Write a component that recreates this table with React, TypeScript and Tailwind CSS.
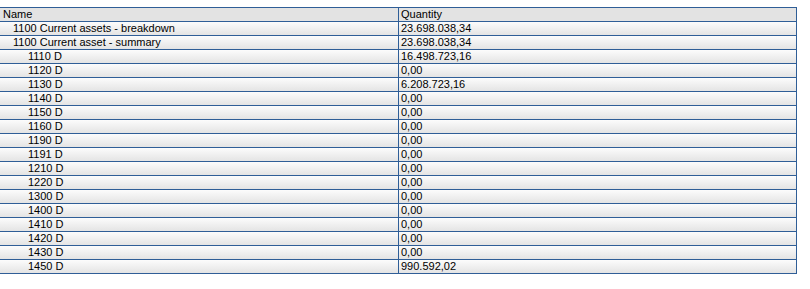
const rows: { name: string; level: number; qty: string }[] = [
  { name: '1100 Current assets - breakdown', level: 1, qty: '23.698.038,34' },
  { name: '1100 Current asset - summary', level: 1, qty: '23.698.038,34' },
  { name: '1110 D', level: 2, qty: '16.498.723,16' },
  { name: '1120 D', level: 2, qty: '0,00' },
  { name: '1130 D', level: 2, qty: '6.208.723,16' },
  { name: '1140 D', level: 2, qty: '0,00' },
  { name: '1150 D', level: 2, qty: '0,00' },
  { name: '1160 D', level: 2, qty: '0,00' },
  { name: '1190 D', level: 2, qty: '0,00' },
  { name: '1191 D', level: 2, qty: '0,00' },
  { name: '1210 D', level: 2, qty: '0,00' },
  { name: '1220 D', level: 2, qty: '0,00' },
  { name: '1300 D', level: 2, qty: '0,00' },
  { name: '1400 D', level: 2, qty: '0,00' },
  { name: '1410 D', level: 2, qty: '0,00' },
  { name: '1420 D', level: 2, qty: '0,00' },
  { name: '1430 D', level: 2, qty: '0,00' },
  { name: '1450 D', level: 2, qty: '990.592,02' },
]

export default function App() {
  return (
    <div className="h-[289px] w-[810px] bg-white pt-[7px] font-['Liberation_Sans',Arial,sans-serif] text-[11px] leading-[13px] text-black">
      <div className="w-[797px] border-t border-r border-[#2f5e97]">
        <div className="grid h-[14px] grid-cols-[399px_397px] border-b border-[#2f5e97] bg-[#e3e3e3]">
          <div className="border-r border-[#2f5e97] pl-[3px]">Name</div>
          <div className="pl-[2px]">Quantity</div>
        </div>
        {rows.map((r, i) => (
          <div
            key={i}
            className="grid h-[14px] grid-cols-[399px_397px] border-b border-[#2f5e97] bg-gradient-to-b from-[#fcfcfc] to-[#e4e4e4]"
          >
            <div
              className={
                'border-r border-[#2f5e97] ' + (r.level === 1 ? 'pl-[13px]' : 'pl-[28px]')
              }
            >
              {r.name}
            </div>
            <div className="pl-[2px]">{r.qty}</div>
          </div>
        ))}
      </div>
    </div>
  )
}
